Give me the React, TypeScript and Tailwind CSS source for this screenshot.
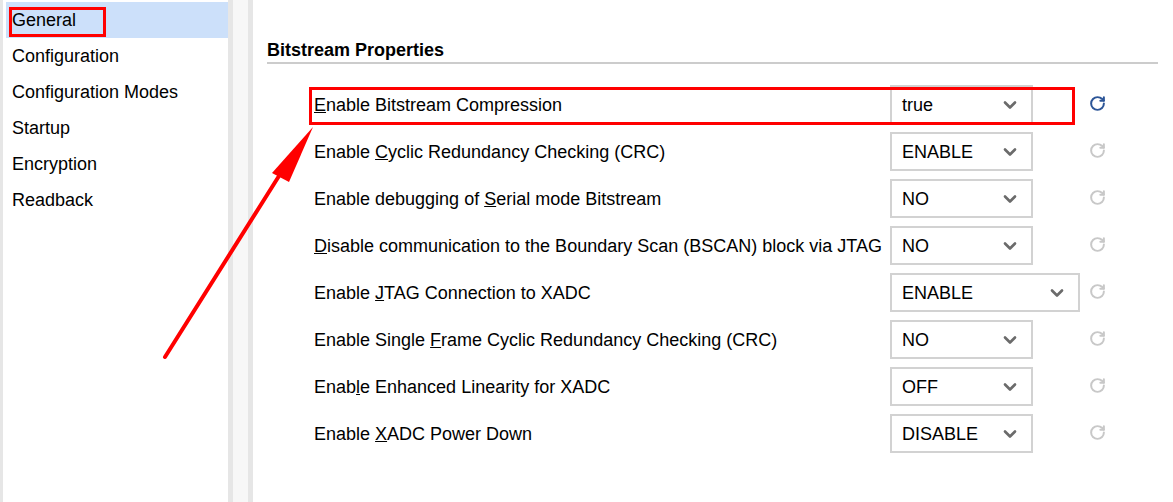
import React from "react";
import { ChevronDown, RotateCw } from "lucide-react";

const nav = ["General", "Configuration", "Configuration Modes", "Startup", "Encryption", "Readback"];

type Row = { pre: string; key: string; post: string; value: string; wide?: boolean };
const rows: Row[] = [
  { pre: "", key: "E", post: "nable Bitstream Compression", value: "true" },
  { pre: "Enable ", key: "C", post: "yclic Redundancy Checking (CRC)", value: "ENABLE" },
  { pre: "Enable debugging of ", key: "S", post: "erial mode Bitstream", value: "NO" },
  { pre: "", key: "D", post: "isable communication to the Boundary Scan (BSCAN) block via JTAG", value: "NO" },
  { pre: "Enable ", key: "J", post: "TAG Connection to XADC", value: "ENABLE", wide: true },
  { pre: "Enable Single ", key: "F", post: "rame Cyclic Redundancy Checking (CRC)", value: "NO" },
  { pre: "Enab", key: "l", post: "e Enhanced Linearity for XADC", value: "OFF" },
  { pre: "Enable ", key: "X", post: "ADC Power Down", value: "DISABLE" },
];

export default function App() {
  return (
    <div className="relative flex h-[502px] w-[1173px] overflow-hidden bg-white text-[18px] text-black" style={{ fontFamily: '"Liberation Sans", Arial, sans-serif' }}>
      <div className="w-[3px] bg-[#e6e6e6]" />
      {/* sidebar */}
      <div className="w-[225px] pl-[3px] pt-[2px]">
        {nav.map((n, i) => (
          <div key={n} className={"flex h-9 items-center pl-[6px] " + (i === 0 ? "bg-[#cce0fa]" : "")}>{n}</div>
        ))}
      </div>
      {/* splitter */}
      <div className="w-[5px] bg-[#e6e6e6]" />
      <div className="w-[15px] bg-[#f7f7f7]" />
      <div className="w-[5px] bg-[#e6e6e6]" />
      {/* main */}
      <div className="flex-1 pl-[14px] pr-[15px] pt-[40px]">
        <div className="border-b-2 border-[#cccccc] pb-[1px] text-[18px] font-bold leading-[21px]">Bitstream Properties</div>
        <div className="mt-4 pl-[47px]">
          {rows.map((r, i) => (
            <div key={i} className="flex h-[47px] items-center">
              <div className="w-[576px] whitespace-nowrap pt-[3px]">
                {r.pre}<u>{r.key}</u>{r.post}
              </div>
              <div className="w-[190px] pt-[1px]">
                <div className={"flex h-[39px] items-center justify-between border-2 border-[#d2d2d2] bg-white pl-[10px] pr-[11px] " + (r.wide ? "w-[190px]" : "w-[143px]")}>
                  <span className="pt-[2px]">{r.value}</span>
                  <ChevronDown size={20} strokeWidth={3.2} className="mt-[2px] text-[#6b6b6b]" />
                </div>
              </div>
              <RotateCw size={17} strokeWidth={2.8} className={"ml-[9px] " + (i === 0 ? "text-[#2c5597]" : "text-[#c8c8c8]")} />
            </div>
          ))}
        </div>
      </div>

      {/* annotations */}
      <div className="pointer-events-none absolute left-[9px] top-[7px] h-[30px] w-[97px] border-[3px] border-[#ff0000]" />
      <div className="pointer-events-none absolute left-[309px] top-[87px] h-[38px] w-[766px] border-[3px] border-[#ff0000]" />
      <svg className="pointer-events-none absolute left-0 top-0" width="1173" height="502">
        <line x1="165" y1="357" x2="284" y2="168" stroke="#ff0000" strokeWidth="4" strokeLinecap="round" />
        <polygon points="313,127 272,173 289,182" fill="#ff0000" />
      </svg>
    </div>
  );
}
